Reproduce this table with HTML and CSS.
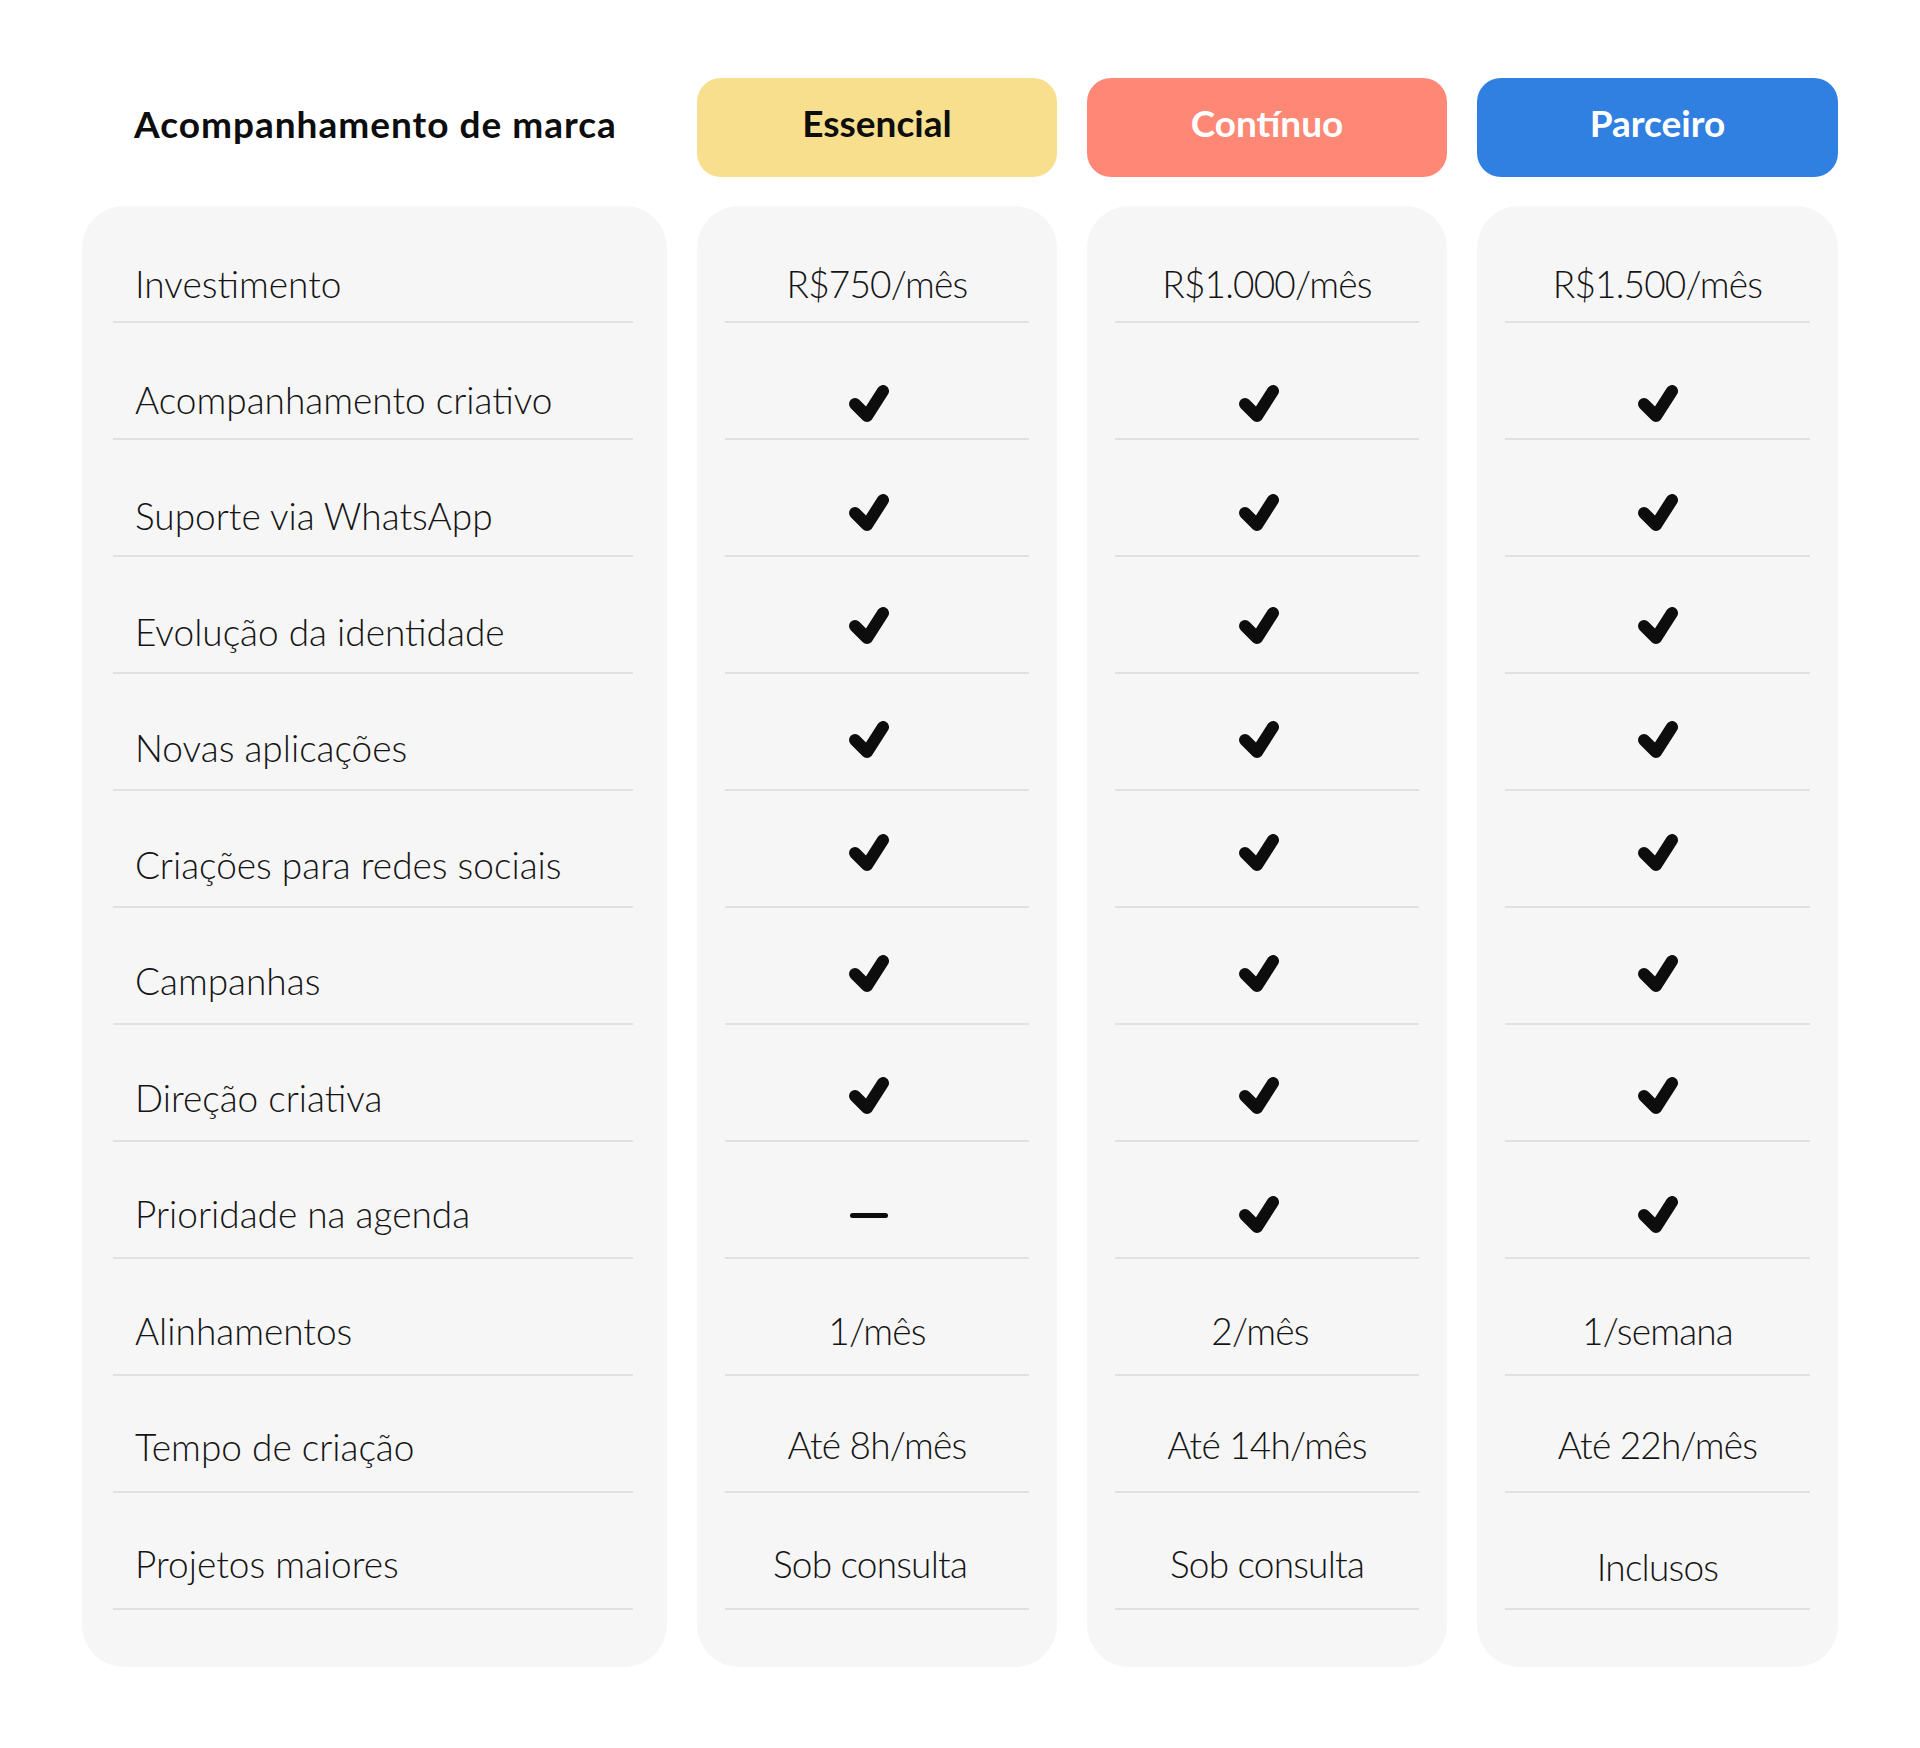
FILE: index.html
```html
<!DOCTYPE html>
<html lang="pt-BR">
<head>
<meta charset="utf-8">
<title>Acompanhamento de marca</title>
<link rel="stylesheet" href="styles.css">
</head>
<body>
<svg class="defs" width="0" height="0" aria-hidden="true">
  <symbol id="check" viewBox="0 0 40 38">
    <path d="M6 19 L18 31 L34 6" fill="none" stroke="#0d0d0d" stroke-width="12" stroke-linecap="round" stroke-linejoin="round"/>
  </symbol>
</svg>
<main class="plans">
  <div class="plans-title">Acompanhamento de marca</div>
  <div class="plan-head plan-head--essencial">Essencial</div>
  <div class="plan-head plan-head--continuo">Contínuo</div>
  <div class="plan-head plan-head--parceiro">Parceiro</div>

  <section class="card card--labels">
    <div class="row">Investimento</div>
    <div class="row">Acompanhamento criativo</div>
    <div class="row">Suporte via WhatsApp</div>
    <div class="row">Evolução da identidade</div>
    <div class="row">Novas aplicações</div>
    <div class="row">Criações para redes sociais</div>
    <div class="row">Campanhas</div>
    <div class="row">Direção criativa</div>
    <div class="row">Prioridade na agenda</div>
    <div class="row">Alinhamentos</div>
    <div class="row">Tempo de criação</div>
    <div class="row">Projetos maiores</div>
  </section>

  <section class="card card--plan card--shifted">
    <div class="row">R$750/mês</div>
    <div class="row"><svg class="check"><use href="#check"/></svg></div>
    <div class="row"><svg class="check"><use href="#check"/></svg></div>
    <div class="row"><svg class="check"><use href="#check"/></svg></div>
    <div class="row"><svg class="check"><use href="#check"/></svg></div>
    <div class="row"><svg class="check"><use href="#check"/></svg></div>
    <div class="row"><svg class="check"><use href="#check"/></svg></div>
    <div class="row"><svg class="check"><use href="#check"/></svg></div>
    <div class="row"><span class="dash"></span></div>
    <div class="row">1/mês</div>
    <div class="row">Até 8h/mês</div>
    <div class="row"><span class="nudge">Sob consulta</span></div>
  </section>

  <section class="card card--plan card--shifted">
    <div class="row">R$1.000/mês</div>
    <div class="row"><svg class="check"><use href="#check"/></svg></div>
    <div class="row"><svg class="check"><use href="#check"/></svg></div>
    <div class="row"><svg class="check"><use href="#check"/></svg></div>
    <div class="row"><svg class="check"><use href="#check"/></svg></div>
    <div class="row"><svg class="check"><use href="#check"/></svg></div>
    <div class="row"><svg class="check"><use href="#check"/></svg></div>
    <div class="row"><svg class="check"><use href="#check"/></svg></div>
    <div class="row"><svg class="check"><use href="#check"/></svg></div>
    <div class="row"><span class="nudge">2/mês</span></div>
    <div class="row">Até 14h/mês</div>
    <div class="row">Sob consulta</div>
  </section>

  <section class="card card--plan">
    <div class="row">R$1.500/mês</div>
    <div class="row"><svg class="check"><use href="#check"/></svg></div>
    <div class="row"><svg class="check"><use href="#check"/></svg></div>
    <div class="row"><svg class="check"><use href="#check"/></svg></div>
    <div class="row"><svg class="check"><use href="#check"/></svg></div>
    <div class="row"><svg class="check"><use href="#check"/></svg></div>
    <div class="row"><svg class="check"><use href="#check"/></svg></div>
    <div class="row"><svg class="check"><use href="#check"/></svg></div>
    <div class="row"><svg class="check"><use href="#check"/></svg></div>
    <div class="row">1/semana</div>
    <div class="row">Até 22h/mês</div>
    <div class="row"><span class="drop">Inclusos</span></div>
  </section>
</main>
</body>
</html>
```

FILE: styles.css
```css
* {
  box-sizing: border-box;
}

html,
body {
  margin: 0;
  background: #ffffff;
}

body {
  font-family: "Lato", "Liberation Sans", sans-serif;
  color: #111111;
  padding-top: 78px;
}

.defs {
  position: absolute;
  width: 0;
  height: 0;
  overflow: hidden;
}

.plans {
  width: 1756px;
  margin: 0 auto;
  display: grid;
  grid-template-columns: 585px 360px 360px 361px;
  grid-template-rows: 99px auto;
  column-gap: 30px;
  row-gap: 29px;
}

.plans-title {
  display: flex;
  align-items: center;
  padding-left: 52px;
  padding-bottom: 8px;
  font-size: 37px;
  font-weight: 700;
  letter-spacing: 1px;
  color: #0d0d0d;
}

.plan-head {
  display: flex;
  align-items: center;
  justify-content: center;
  border-radius: 24px;
  font-size: 37px;
  font-weight: 700;
  letter-spacing: 0;
  padding-bottom: 10px;
}

.plan-head--essencial {
  background: #f8df8e;
  color: #0d0d0d;
}

.plan-head--continuo {
  background: #ff8776;
  color: #ffffff;
}

.plan-head--parceiro {
  background: #3080e2;
  color: #ffffff;
}

.card {
  background: #f6f6f6;
  border-radius: 42px;
  padding: 0 28px 57px 28px;
  display: flex;
  flex-direction: column;
}

.card--labels {
  padding: 0 34px 57px 31px;
}

/* --pb: text offset above the divider, --cb: icon centre above the divider */
.row {
  --pb: 17px;
  --cb: 38px;
  height: 117px;
  border-bottom: 2px solid #e2e0e2;
  display: flex;
  align-items: flex-end;
  padding-bottom: var(--pb);
  font-size: 37px;
  font-weight: 300;
  line-height: 40px;
  color: #141414;
}

.row:nth-child(2)  { --pb: 18px; --cb: 34.5px; }
.row:nth-child(3)  { --pb: 19px; --cb: 42.5px; }
.row:nth-child(4)  { --pb: 20px; --cb: 46px; }
.row:nth-child(5)  { --pb: 21px; --cb: 49px; }
.row:nth-child(6)  { --pb: 21px; --cb: 53px; }
.row:nth-child(7)  { --pb: 22px; --cb: 49px; }
.row:nth-child(8)  { --pb: 22px; --cb: 44.5px; }
.row:nth-child(9)  { --pb: 23px; --cb: 42px; }
.row:nth-child(10) { --pb: 23px; }
.row:nth-child(11) { --pb: 24px; }
.row:nth-child(12) { --pb: 24px; }

.card--plan .row:nth-child(11) {
  --pb: 26px;
}

.card--labels .row {
  padding-left: 22px;
}

.card--plan .row {
  justify-content: center;
  letter-spacing: -0.8px;
}

.check {
  width: 40px;
  height: 38px;
  margin-bottom: calc(var(--cb) - 19px - var(--pb));
}

.card--shifted .check,
.card--shifted .dash {
  margin-right: 16px;
}

.dash {
  display: block;
  width: 38px;
  height: 5px;
  border-radius: 3px;
  background: #0d0d0d;
  margin-bottom: calc(var(--cb) - 2.5px - var(--pb));
}

.nudge {
  margin-right: 14px;
}

.drop {
  margin-bottom: -3px;
}
```
